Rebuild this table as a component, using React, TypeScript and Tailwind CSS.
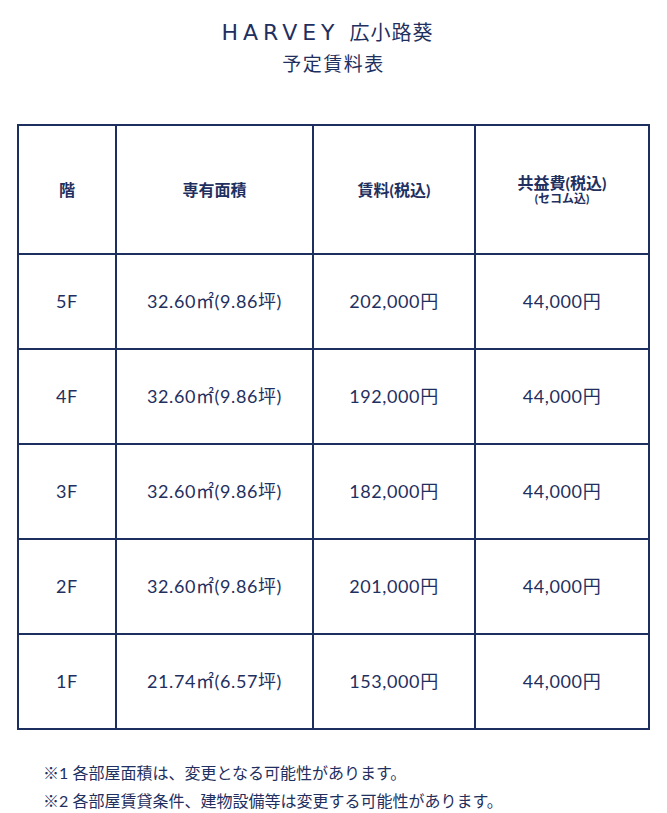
const rows = [
  { floor: "5F", area: "32.60㎡(9.86坪)", rent: "202,000円", fee: "44,000円" },
  { floor: "4F", area: "32.60㎡(9.86坪)", rent: "192,000円", fee: "44,000円" },
  { floor: "3F", area: "32.60㎡(9.86坪)", rent: "182,000円", fee: "44,000円" },
  { floor: "2F", area: "32.60㎡(9.86坪)", rent: "201,000円", fee: "44,000円" },
  { floor: "1F", area: "21.74㎡(6.57坪)", rent: "153,000円", fee: "44,000円" },
];

const font = { fontFamily: '"Lato", "Noto Sans CJK JP", sans-serif' };
const logoFont = { fontFamily: '"DejaVu Sans", sans-serif' };

export default function App() {
  return (
    <div className="w-[667px] bg-white text-[#1f3060]" style={font}>
      {/* TITLE */}
      <div className="pt-[17px] text-center">
        <div className="pr-[12px] leading-[30px]">
          <span className="text-[22px] tracking-[5px]" style={logoFont}>HARVEY</span>
          <span className="ml-[10px] text-[20px] tracking-[1px]">広小路葵</span>
        </div>
        <div className="text-[19px] leading-[30px] tracking-[1.5px]">予定賃料表</div>
      </div>

      {/* TABLE */}
      <table className="mt-[45px] ml-[17px] w-[631px] table-fixed border-collapse text-center">
        <colgroup>
          <col className="w-[98px]" />
          <col className="w-[197px]" />
          <col className="w-[162px]" />
          <col className="w-[174px]" />
        </colgroup>
        <thead>
          <tr className="h-[129px] text-[16px] font-bold">
            <th className="border-2 border-[#1c2f5e]">階</th>
            <th className="border-2 border-[#1c2f5e]">専有面積</th>
            <th className="border-2 border-[#1c2f5e]">賃料(税込)</th>
            <th className="border-2 border-[#1c2f5e]">
              <div className="leading-[18px]">共益費(税込)</div>
              <div className="text-[12px] leading-[14px]">(セコム込)</div>
            </th>
          </tr>
        </thead>
        <tbody>
          {rows.map((r) => (
            <tr key={r.floor} className="h-[95px] text-[18px] tracking-[0.6px]">
              <td className="border-2 border-[#1c2f5e]">{r.floor}</td>
              <td className="border-2 border-[#1c2f5e]">{r.area}</td>
              <td className="border-2 border-[#1c2f5e]">{r.rent}</td>
              <td className="border-2 border-[#1c2f5e]">{r.fee}</td>
            </tr>
          ))}
        </tbody>
      </table>

      {/* NOTES */}
      <div className="mt-[29px] pl-[43px] text-[16px] leading-[28px]">
        <p>※1 各部屋面積は、変更となる可能性があります。</p>
        <p>※2 各部屋賃貸条件、建物設備等は変更する可能性があります。</p>
      </div>
    </div>
  );
}
